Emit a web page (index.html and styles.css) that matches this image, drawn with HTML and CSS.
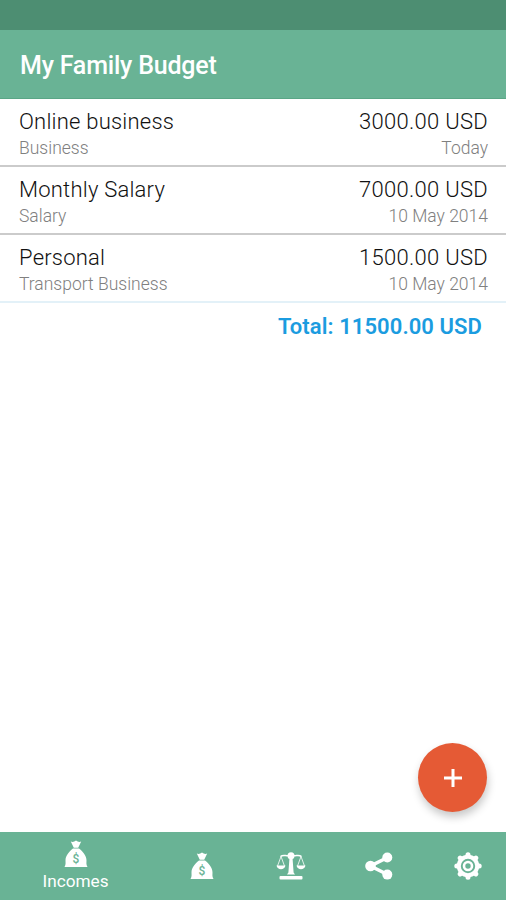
FILE: index.html
```html
<!DOCTYPE html>
<html lang="en">
<head>
  <meta charset="UTF-8" />
  <meta name="viewport" content="width=device-width, initial-scale=1.0"/>
  <title>My Family Budget</title>
  <link rel="stylesheet" href="styles.css">
</head>
<body>

  <div class="status-bar"></div>
  <div class="header">
    <h1>My Family Budget</h1>
  </div>

  <div class="list">
    <div class="entry">
      <div class="line"><span>Online business</span><span class="amount">3000.00 USD</span></div>
      <div class="line small"><span>Business</span><span>Today</span></div>
    </div>
    <div class="entry">
      <div class="line"><span>Monthly Salary</span><span class="amount">7000.00 USD</span></div>
      <div class="line small"><span>Salary</span><span>10 May 2014</span></div>
    </div>
    <div class="entry last">
      <div class="line"><span>Personal</span><span class="amount">1500.00 USD</span></div>
      <div class="line small"><span>Transport Business</span><span>10 May 2014</span></div>
    </div>
    <div class="total">Total: 11500.00 USD</div>
  </div>

  <button class="add-button" aria-label="Add income">
    <svg width="20" height="20" viewBox="0 0 20 20"><path d="M10 1v18M1 10h18" stroke="#fff" stroke-width="3"/></svg>
  </button>

  <div class="nav">
    <div class="nav-item active">
      <svg width="24" height="28" viewBox="0 0 24 28">
        <path d="M6.8 1.6Q9.500 2.600 12 .5Q14.500 2.600 17.200 1.600L14.200 7.800H9.800Z" fill="#fff"/>
        <path d="M9 8.500H15C19.500 12 22.500 16 22.500 20.500C22.500 23 22 24.500 23.500 27H.5C2 24.500 1.500 23 1.500 20.500C1.500 16 4.500 12 9 8.500Z" fill="#fff"/>
        <text x="12" y="22.500" text-anchor="middle" class="dollar">$</text>
      </svg>
      <span>Incomes</span>
    </div>
    <div class="nav-item">
      <svg width="24" height="28" viewBox="0 0 24 28">
        <path d="M6.8 1.6Q9.500 2.600 12 .5Q14.500 2.600 17.200 1.600L14.200 7.800H9.800Z" fill="#fff"/>
        <path d="M9 8.500H15C19.500 12 22.500 16 22.500 20.500C22.500 23 22 24.500 23.500 27H.5C2 24.500 1.500 23 1.500 20.500C1.500 16 4.500 12 9 8.500Z" fill="#fff"/>
        <text x="12" y="22.500" text-anchor="middle" class="dollar">$</text>
      </svg>
    </div>
    <div class="nav-item">
      <svg width="30" height="28" viewBox="0 0 30 28">
        <g fill="none" stroke="#fff" stroke-width="1.600">
          <path d="M4.500 4.500C7 2.500 9 3.800 12 3.800H18C21 3.800 23 2.500 25.500 4.500"/>
          <path d="M5 4.500L1.500 14M5 4.500L8.500 14M25 4.500L21.500 14M25 4.500L28.500 14" stroke-width=".8"/>
        </g>
        <path d="M.5 13.500H9.500C9 16 7 17.200 5 17.200S1 16 .5 13.500ZM20.500 13.500H29.500C29 16 27 17.200 25 17.200S21 16 20.500 13.500Z" fill="#fff"/>
        <circle cx="15" cy="3.800" r="3.500" fill="#fff"/>
        <path d="M13.400 7H16.600L17.600 20.500L19 22.500H11L12.400 20.500Z" fill="#fff"/>
        <rect x="3.500" y="24" width="23" height="3.500" rx="1" fill="#fff"/>
      </svg>
    </div>
    <div class="nav-item">
      <svg width="28" height="28" viewBox="0 0 28 28">
        <path d="M22.500 5.500L5.500 14L22.500 22.500" fill="none" stroke="#fff" stroke-width="3.600"/>
        <g fill="#fff"><circle cx="22.300" cy="5.500" r="5"/><circle cx="5.500" cy="14" r="5.300"/><circle cx="22.300" cy="22.600" r="5"/></g>
      </svg>
    </div>
    <div class="nav-item">
      <svg width="28" height="28" viewBox="0 0 28 28">
        <g fill="none" stroke="#fff">
          <circle cx="14" cy="14" r="9.200" stroke-width="4"/>
          <circle cx="14" cy="14" r="4" stroke-width="2.600"/>
        </g>
        <g stroke="#fff" stroke-width="5" stroke-linecap="round">
          <path d="M14 2.800v.7M14 24.500v.7M2.800 14h.7M24.500 14h.7M6.100 6.100l.5.5M21.400 21.400l.5.5M6.100 21.900l.5-.5M21.400 6.600l.5-.5"/>
        </g>
      </svg>
    </div>
  </div>

</body>
</html>
```
FILE: styles.css
```css
* {
  box-sizing: border-box;
}
body {
  margin: 0;
  height: 100vh;
  display: flex;
  flex-direction: column;
  overflow: hidden;
  background-color: #fff;
  font-family: Roboto, sans-serif;
}
.status-bar {
  height: 30px;
  background-color: #4d8e72;
}
.header {
  height: 69px;
  padding: 3px 20px 0;
  display: flex;
  align-items: center;
  background-color: #69b395;
  border-bottom: 1px solid #5aa686;
}
.header h1 {
  margin: 0;
  color: white;
  font-size: 25px;
  font-weight: 500;
  letter-spacing: -0.2px;
}
.list {
  flex: 1;
}

/* Income rows */
.entry {
  height: 68px;
  padding: 9px 18px 0 19px;
  border-bottom: 2px solid #cbcbcb;
}
.entry.last {
  border-bottom-color: #e3f1f8;
}
.line {
  display: flex;
  justify-content: space-between;
  color: #111;
  font-size: 22px;
  font-weight: 300;
  letter-spacing: 0.22px;
  line-height: 28px;
}
.amount {
  letter-spacing: 0.3px;
}
.line.small {
  color: #808080;
  font-size: 17.5px;
  letter-spacing: 0;
  line-height: 24px;
}
.total {
  padding: 10px 24px 0;
  text-align: right;
  color: #1b9ce0;
  font-size: 22px;
  font-weight: 600;
  letter-spacing: 0.08px;
  line-height: 28px;
}

/* Floating button */
.add-button {
  position: absolute;
  right: 19px;
  bottom: 88px;
  width: 69px;
  height: 69px;
  padding: 0;
  display: flex;
  align-items: center;
  justify-content: center;
  background-color: #e55a35;
  border: none;
  border-radius: 50%;
  box-shadow: 1px 5px 9px rgba(0, 0, 0, 0.22);
}

/* Bottom navigation */
.nav {
  height: 68px;
  display: grid;
  grid-template-columns: 151px 101px 77px 99px 80px;
  background-color: #69b395;
}
.nav-item {
  display: flex;
  align-items: center;
  justify-content: center;
}
.nav-item.active {
  flex-direction: column;
  padding-top: 1px;
  color: white;
  font-size: 17.2px;
  line-height: 26px;
}
.dollar {
  fill: #69b395;
  font-size: 12px;
  font-weight: 500;
}
```
